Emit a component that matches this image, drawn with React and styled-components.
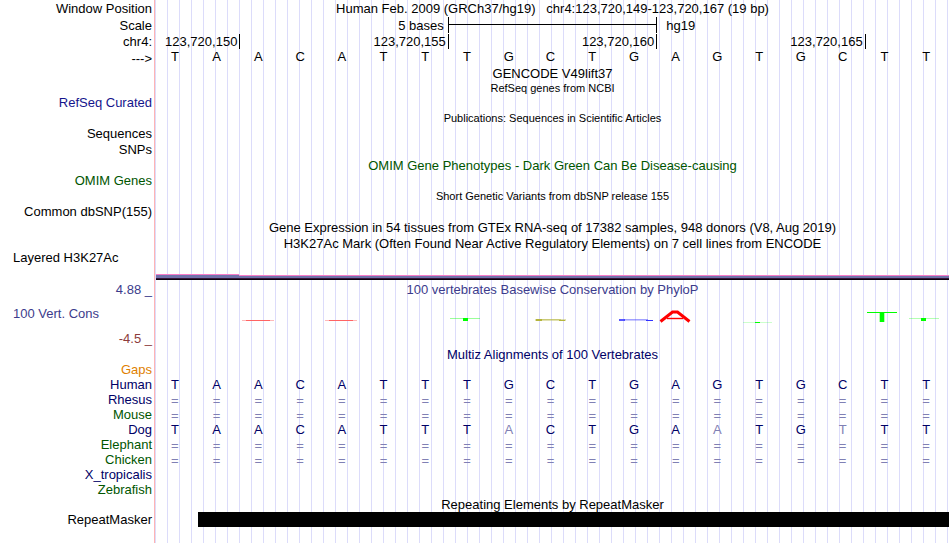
import React from "react";
import styled, { createGlobalStyle } from "styled-components";

const GlobalStyle = createGlobalStyle`
  * { box-sizing: border-box; }
  body {
    margin: 0;
    background: #fff;
    font-family: "Liberation Sans", Arial, Helvetica, sans-serif;
    font-size: 13px;
    color: #000;
  }
`;

const Browser = styled.main`
  min-height: 100vh;
  overflow: hidden;
  background:
    linear-gradient(#ffb4b4, #ffb4b4) 154px 0 / 1px 100% no-repeat,
    linear-gradient(#fff, #fff) 0 0 / 155px 100% no-repeat,
    linear-gradient(90deg, #dcdcfa 1px, transparent 1px) 11px 0 / 12px 100%;
`;

const Row = styled.div`
  display: grid;
  grid-template-columns: 152px minmax(0, 1fr);
  column-gap: 4px;
  padding-right: 1px;
  height: ${(p) => p.$height}px;
  line-height: ${(p) => p.$height}px;
  white-space: pre;
`;

const Label = styled.div`
  text-align: ${(p) => (p.$left ? "left" : "right")};
  padding-left: ${(p) => (p.$left ? 13 : 0)}px;
  color: ${(p) => p.$color || "#000"};
`;

const Title = styled.div`
  grid-column: 2;
  text-align: center;
  font-size: ${(p) => (p.$small ? 11 : 13)}px;
  color: ${(p) => p.$color || "#000"};
`;

const Scale = styled.div`
  display: grid;
  grid-template-columns: 7fr 5fr 7fr;
  padding-right: 1px;
`;

const ScaleText = styled.span`
  text-align: ${(p) => (p.$end ? "right" : "left")};
  padding: 0 ${(p) => (p.$end ? 4 : 10)}px;
`;

const ScaleBar = styled.div`
  height: 16px;
  margin-right: -1px;
  border: solid #000;
  border-width: 0 1px;
  background: linear-gradient(#000, #000) 0 7px / 100% 1px no-repeat;
`;

const Ruler = styled.div`
  display: grid;
  grid-template-columns: 2fr 5fr 5fr 5fr 2fr;
  align-items: start;
  padding-right: 1px;
`;

const Tick = styled.span`
  height: 15px;
  margin-right: -1px;
  padding-right: 2px;
  border-right: 1px solid #000;
  text-align: right;
`;

const BaseTable = styled.table`
  width: calc(100% - 3px);
  table-layout: fixed;
  border-collapse: collapse;
`;

const Species = styled.th`
  width: 154px;
  height: ${(p) => p.$height || 15}px;
  padding: 0 2px 0 0;
  font-weight: 400;
  line-height: 15px;
  text-align: right;
  color: ${(p) => p.$color};
`;

const Base = styled.td`
  padding: 0;
  line-height: ${(p) => (p.$top ? 13 : 15)}px;
  text-align: center;
  vertical-align: ${(p) => (p.$top ? "top" : "middle")};
  color: ${(p) => p.$color};
`;

const Match = styled(Base)`
  line-height: 13px;
  vertical-align: bottom;
`;

const Signal = styled.div`
  display: grid;
  grid-template-columns: 2fr 17fr;
  align-items: end;
  height: 15px;
`;

const SignalPart = styled.div`
  height: ${(p) => (p.$high ? 6 : 5)}px;
  background: linear-gradient(
    #f77cc8 1px,
    #7272ac 1px calc(100% - 2px),
    #381438 calc(100% - 2px) calc(100% - 1px),
    #08000c calc(100% - 1px)
  );
`;

const Conservation = styled.svg`
  display: block;
  width: 100%;
  height: 33px;
`;

const Repeat = styled.div`
  height: 15px;
  background: linear-gradient(90deg, transparent 42px, #000 42px);
`;

const BLUE = "#000066";
const GREEN = "#005500";
const FADED = "#8080b4";
const SLATE = "#3c3c8c";

const HUMAN = "TAACATTTGCTGAGTGCTT";
const DOG = "TAACATTTACTGAATGTTT";
const EQUAL = "=".repeat(19);

const alignments = [
  { name: "Gaps", color: "#e08000", bases: "" },
  { name: "Human", color: BLUE, bases: HUMAN },
  { name: "Rhesus", color: BLUE, bases: EQUAL },
  { name: "Mouse", color: GREEN, bases: EQUAL },
  { name: "Dog", color: BLUE, bases: DOG },
  { name: "Elephant", color: GREEN, bases: EQUAL },
  { name: "Chicken", color: GREEN, bases: EQUAL },
  { name: "X_tropicalis", color: BLUE, bases: "" },
  { name: "Zebrafish", color: GREEN, bases: "" },
];

function Track({ height, label, left, labelColor, title, small, color, children }) {
  return (
    <Row $height={height}>
      <Label $left={left} $color={labelColor}>{label}</Label>
      {title ? <Title $small={small} $color={color}>{title}</Title> : children}
    </Row>
  );
}

function Alignment({ name, color, bases }) {
  return (
    <tr>
      <Species scope="row" $color={color}>{name}</Species>
      {Array.from(HUMAN, (reference, i) => {
        const base = bases[i] || "";
        return base === "=" ? (
          <Match key={i} $color={FADED}>=</Match>
        ) : (
          <Base key={i} $color={base === reference ? BLUE : FADED}>{base}</Base>
        );
      })}
    </tr>
  );
}

function ConservationChart() {
  return (
    <Conservation viewBox="0 -5 793 33" preserveAspectRatio="none" role="img" aria-label="Basewise conservation">
      <g fill="#ff6464">
        <rect x="86" y="18" width="32" height="1" opacity="0.45" />
        <rect x="90" y="18" width="24" height="1" />
        <rect x="169" y="18" width="32" height="1" opacity="0.45" />
        <rect x="173" y="18" width="24" height="1" />
      </g>
      <g fill="#00ff00">
        <rect x="294" y="16" width="30" height="1" opacity="0.4" />
        <rect x="307" y="16" width="5" height="3" />
        <rect x="587" y="20" width="29" height="1" opacity="0.2" />
        <rect x="599" y="20" width="5" height="1" />
        <rect x="711" y="10" width="30" height="1" />
        <rect x="724" y="10" width="4" height="10" />
        <rect x="723" y="11" width="6" height="9" opacity="0.3" />
        <rect x="753" y="16" width="30" height="1" opacity="0.3" />
        <rect x="765" y="16" width="5" height="3" />
      </g>
      <g fill="#b4b43c">
        <rect x="379" y="17" width="31" height="2" opacity="0.4" />
        <rect x="380" y="17" width="6" height="2" />
        <rect x="386" y="17" width="19" height="1" opacity="0.5" />
        <rect x="403" y="18" width="6" height="1" />
      </g>
      <g fill="#3030ff">
        <rect x="463" y="17" width="6" height="2" opacity="0.8" />
        <rect x="468" y="17" width="24" height="1" opacity="0.45" />
        <rect x="468" y="18" width="22" height="1" opacity="0.25" />
        <rect x="490" y="18" width="7" height="1" />
      </g>
      <g stroke="#ff0000" fill="none">
        <path d="M504.5 19.5 L516.5 10 H521.5 L533.5 19.5" strokeWidth="3" />
        <path d="M511 16.5 H527" strokeWidth="1.4" />
      </g>
    </Conservation>
  );
}

export default function App() {
  return (
    <Browser>
      <GlobalStyle />
      <Track
        height={17}
        label="Window Position"
        title="Human Feb. 2009 (GRCh37/hg19)   chr4:123,720,149-123,720,167 (19 bp)"
      />
      <Track height={17} label="Scale">
        <Scale>
          <ScaleText $end>5 bases</ScaleText>
          <ScaleBar />
          <ScaleText>hg19</ScaleText>
        </Scale>
      </Track>
      <Track height={16} label="chr4:">
        <Ruler>
          <Tick>123,720,150</Tick>
          <Tick>123,720,155</Tick>
          <Tick>123,720,160</Tick>
          <Tick>123,720,165</Tick>
        </Ruler>
      </Track>
      <BaseTable>
        <tbody>
          <tr>
            <Species scope="row" $color="#000" $height={16}>{"--->"}</Species>
            {Array.from(HUMAN, (base, i) => (
              <Base key={i} $top $color="#000">{base}</Base>
            ))}
          </tr>
        </tbody>
      </BaseTable>
      <Track height={15} title="GENCODE V49lift37" />
      <Track height={15} small title="RefSeq genes from NCBI" />
      <Track height={14} label="RefSeq Curated" labelColor="#14148c" />
      <Track height={17} small title="Publications: Sequences in Scientific Articles" />
      <Track height={14} label="Sequences" />
      <Track height={17} label="SNPs" />
      <Track
        height={16}
        title="OMIM Gene Phenotypes - Dark Green Can Be Disease-causing"
        color={GREEN}
      />
      <Track height={14} label="OMIM Genes" labelColor={GREEN} />
      <Track height={17} small title="Short Genetic Variants from dbSNP release 155" />
      <Track height={14} label="Common dbSNP(155)" />
      <Track
        height={17}
        title="Gene Expression in 54 tissues from GTEx RNA-seq of 17382 samples, 948 donors (V8, Aug 2019)"
      />
      <Track
        height={15}
        title="H3K27Ac Mark (Often Found Near Active Regulatory Elements) on 7 cell lines from ENCODE"
      />
      <Track height={14} left label="Layered H3K27Ac" />
      <Track height={17}>
        <Signal>
          <SignalPart $high />
          <SignalPart />
        </Signal>
      </Track>
      <Track
        height={15}
        label="4.88 _"
        labelColor={SLATE}
        title="100 vertebrates Basewise Conservation by PhyloP"
        color={SLATE}
      />
      <Track height={33} left label="100 Vert. Cons" labelColor={SLATE}>
        <ConservationChart />
      </Track>
      <Track height={18} label="-4.5 _" labelColor="#8c3c3c" />
      <Track height={14} title="Multiz Alignments of 100 Vertebrates" color={BLUE} />
      <BaseTable>
        <tbody>
          {alignments.map((species) => (
            <Alignment key={species.name} {...species} />
          ))}
        </tbody>
      </BaseTable>
      <Track height={15} title="Repeating Elements by RepeatMasker" />
      <Track height={15} label="RepeatMasker">
        <Repeat />
      </Track>
    </Browser>
  );
}
